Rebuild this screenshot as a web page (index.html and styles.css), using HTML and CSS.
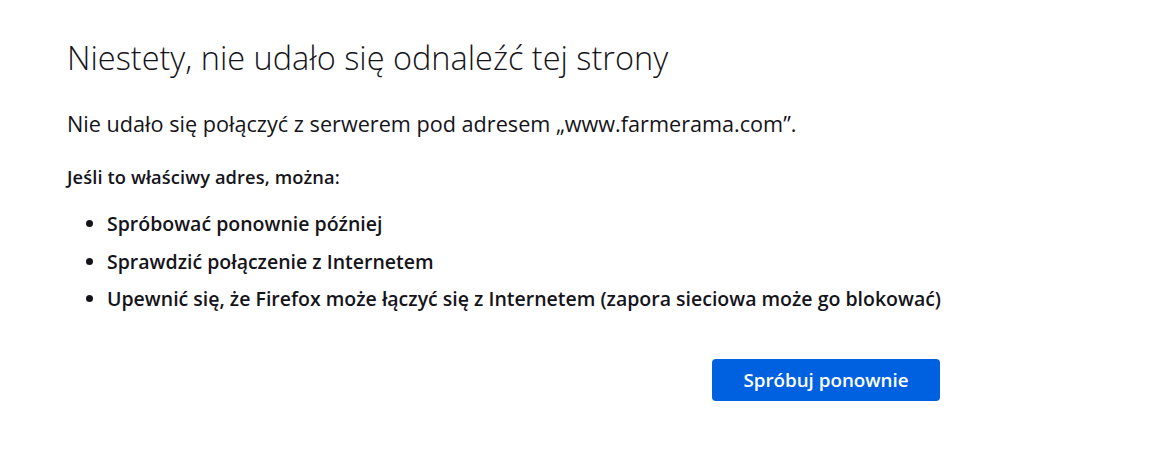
FILE: index.html
```html
<!DOCTYPE html>
<html lang="pl">
<head>
<meta charset="utf-8">
<title>Nie można odnaleźć serwera</title>
<link rel="stylesheet" href="styles.css">
</head>
<body>
<div class="container">
  <h1 class="title">Niestety, nie udało się odnaleźć tej strony</h1>
  <p class="intro">Nie udało się połączyć z serwerem pod adresem „www.farmerama.com”.</p>
  <p class="lead">Jeśli to właściwy adres, można:</p>
  <ul class="tips">
    <li>Spróbować ponownie później</li>
    <li>Sprawdzić połączenie z Internetem</li>
    <li>Upewnić się, że Firefox może łączyć się z Internetem (zapora sieciowa może go blokować)</li>
  </ul>
  <div class="actions">
    <button class="retry">Spróbuj ponownie</button>
  </div>
</div>
</body>
</html>
```

FILE: styles.css
```css
html, body {
  margin: 0;
  padding: 0;
  background: #ffffff;
}
body {
  font-family: "Open Sans", "Noto Sans", sans-serif;
  color: #15141a;
}
.container {
  width: 873px;
  margin-left: 67px;
  padding-top: 36px;
}
.title {
  font-size: 32.5px;
  font-weight: 300;
  line-height: 44px;
  margin: 0;
}
.intro {
  font-size: 21.65px;
  line-height: 30px;
  margin: 29px 0 0;
}
.lead {
  font-size: 18.3px;
  font-weight: 600;
  line-height: 24px;
  margin: 26px 0 0;
  letter-spacing: 0.1px;
}
.tips {
  margin: 22px 0 0;
  padding-left: 40px;
}
.tips li {
  font-size: 19.5px;
  font-weight: 600;
  line-height: 26px;
  margin-bottom: 11.5px;
  white-space: nowrap;
}
.tips li:last-child {
  margin-bottom: 0;
}
.actions {
  display: flex;
  justify-content: flex-end;
  margin-top: 46.6px;
}
.retry {
  width: 228px;
  height: 42px;
  border: none;
  border-radius: 4px;
  background: #0061e0;
  color: #ffffff;
  font-family: "Open Sans", "Noto Sans", sans-serif;
  font-size: 18.8px;
  font-weight: 600;
  padding: 0;
}
```
